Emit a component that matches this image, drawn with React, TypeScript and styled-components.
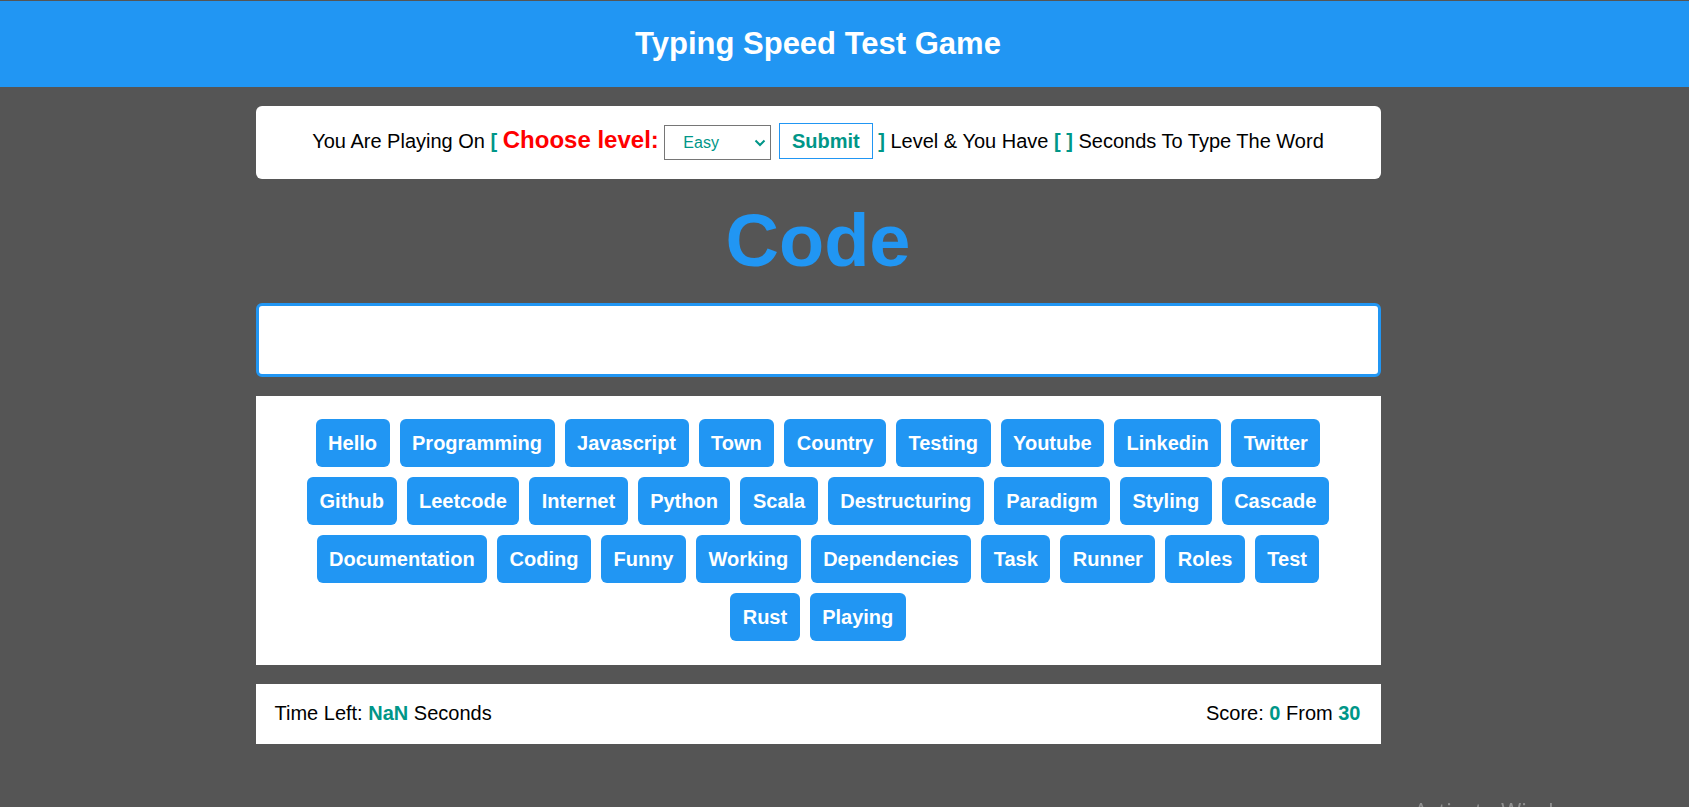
import styled, { createGlobalStyle } from 'styled-components';

const GlobalStyle = createGlobalStyle`
  html, body {
    margin: 0;
    padding: 0;
    background: #555555;
  }
  body {
    font-family: "Liberation Sans", Arial, sans-serif;
    overflow: hidden;
  }
  * {
    box-sizing: border-box;
  }
`;

const words = [
  'Hello', 'Programming', 'Javascript', 'Town', 'Country', 'Testing', 'Youtube',
  'Linkedin', 'Twitter', 'Github', 'Leetcode', 'Internet', 'Python', 'Scala',
  'Destructuring', 'Paradigm', 'Styling', 'Cascade', 'Documentation', 'Coding',
  'Funny', 'Working', 'Dependencies', 'Task', 'Runner', 'Roles', 'Test', 'Rust',
  'Playing',
];

const Page = styled.div`
  min-height: 100vh;
  padding-top: 1px;
  background: #555555;
`;

const Header = styled.header`
  display: flex;
  align-items: center;
  justify-content: center;
  height: 86px;
  padding-right: 53px;
  background: #2196f3;
`;

const Title = styled.h1`
  margin: 0;
  font-size: 31px;
  font-weight: 700;
  color: #fff;
`;

const MainWrap = styled.main`
  display: flex;
  justify-content: center;
  padding: 19px 53px 0 0;
`;

const Main = styled.div`
  display: flex;
  flex-direction: column;
  gap: 19px;
  width: 1125px;
`;

const Message = styled.div`
  padding: 17px 20px 19px;
  background: #fff;
  border-radius: 6px;
  text-align: center;
  font-size: 20px;
  color: #000;
`;

const Bracket = styled.span`
  font-weight: 700;
  color: #009688;
`;

const LevelLabel = styled.span`
  font-size: 24px;
  font-weight: 700;
  color: #ff0000;
`;

const SelectWrap = styled.span`
  position: relative;
  display: inline-block;
`;

const LevelSelect = styled.select`
  appearance: none;
  width: 107px;
  height: 35px;
  padding: 0 0 0 18px;
  border: 1px solid #767676;
  border-radius: 0;
  background: #fff;
  font-family: "Liberation Sans", Arial, sans-serif;
  font-size: 16px;
  color: #009688;
`;

const Chevron = styled.svg`
  position: absolute;
  right: 5px;
  top: 14px;
  pointer-events: none;
`;

const SubmitButton = styled.button`
  height: 36px;
  margin-left: 2px;
  padding: 0 12px;
  border: 1px solid #2196f3;
  background: #fff;
  font-family: "Liberation Sans", Arial, sans-serif;
  font-size: 20px;
  font-weight: 700;
  color: #009688;
`;

const Word = styled.h2`
  margin: 0;
  height: 86px;
  font-size: 74px;
  line-height: 86px;
  font-weight: 700;
  text-align: center;
  color: #2196f3;
`;

const TypeInput = styled.input`
  width: 100%;
  height: 74px;
  border: 3px solid #2196f3;
  border-radius: 6px;
  background: #fff;
  font-family: "Liberation Sans", Arial, sans-serif;
  font-size: 24px;
  text-align: center;
  outline: none;
  caret-color: #333;
`;

const WordsBox = styled.div`
  display: flex;
  flex-wrap: wrap;
  justify-content: center;
  padding: 18px 25px 19px;
  background: #fff;
`;

const WordTag = styled.span`
  margin: 5px;
  padding: 12px 12.5px;
  border-radius: 6px;
  background: #2196f3;
  font-size: 20px;
  line-height: 24px;
  font-weight: 700;
  color: #fff;
`;

const Footer = styled.div`
  display: flex;
  align-items: center;
  justify-content: space-between;
  height: 60px;
  padding: 0 20px 0 19px;
  background: #fff;
  font-size: 20px;
  color: #000;
`;

const Value = styled.span`
  font-weight: 700;
  color: #009688;
`;

const Watermark = styled.div`
  position: fixed;
  left: 1414px;
  top: 797px;
  font-family: "Open Sans", "Noto Sans", sans-serif;
  font-size: 22px;
  line-height: 26px;
  color: rgba(255, 255, 255, 0.35);
  white-space: nowrap;
`;

export default function App() {
  return (
    <Page>
      <GlobalStyle />
      <Header>
        <Title>Typing Speed Test Game</Title>
      </Header>
      <MainWrap>
        <Main>
          <Message>
            You Are Playing On <Bracket>[</Bracket> <LevelLabel>Choose level:</LevelLabel>{' '}
            <SelectWrap>
              <LevelSelect defaultValue="Easy">
                <option>Easy</option>
                <option>Normal</option>
                <option>Hard</option>
              </LevelSelect>
              <Chevron width="12" height="8" viewBox="0 0 12 8">
                <path d="M1.5 1.5 L6 6 L10.5 1.5" fill="none" stroke="#009688" strokeWidth="2" />
              </Chevron>
            </SelectWrap>{' '}
            <SubmitButton>Submit</SubmitButton> <Bracket>]</Bracket> Level &amp; You Have{' '}
            <Bracket>[ ]</Bracket> Seconds To Type The Word
          </Message>
          <Word>Code</Word>
          <TypeInput autoFocus />
          <WordsBox>
            {words.map((w) => (
              <WordTag key={w}>{w}</WordTag>
            ))}
          </WordsBox>
          <Footer>
            <span>
              Time Left: <Value>NaN</Value> Seconds
            </span>
            <span>
              Score: <Value>0</Value> From <Value>30</Value>
            </span>
          </Footer>
        </Main>
      </MainWrap>
      <Watermark>Activate Windows</Watermark>
    </Page>
  );
}
